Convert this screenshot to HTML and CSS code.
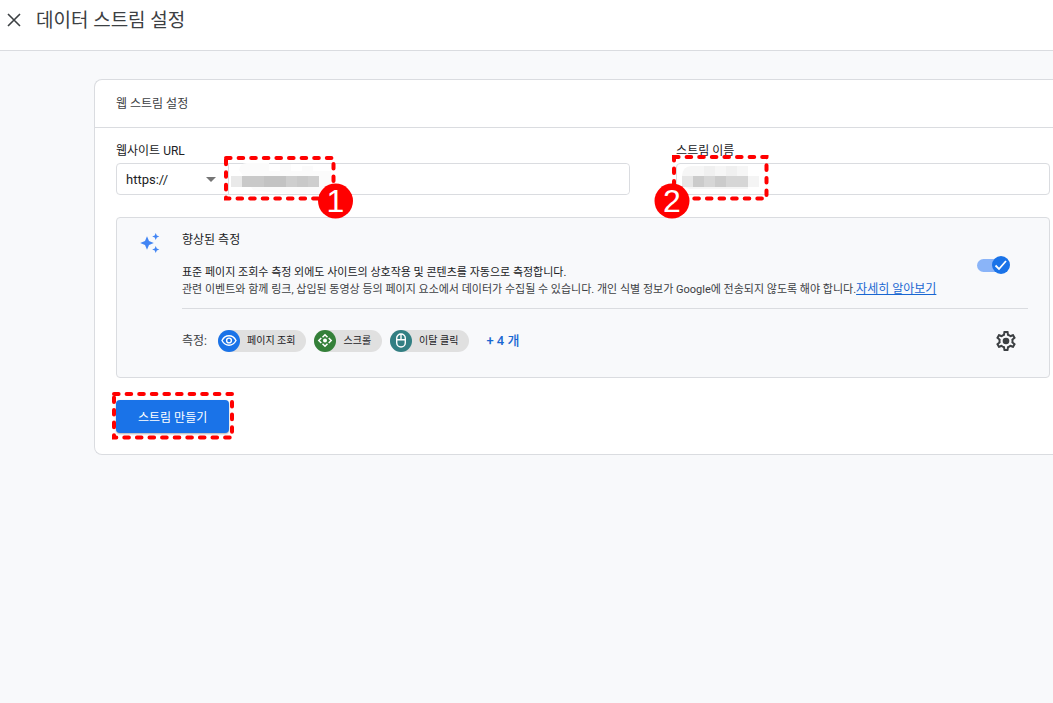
FILE: index.html
```html
<!DOCTYPE html>
<html lang="ko">

<head>
    <meta charset="UTF-8">
    <meta name="viewport" content="width=device-width, initial-scale=1.0">
    <title>데이터 스트림 설정</title>
    <link rel="stylesheet" href="styles.css">
</head>

<body>
    <header class="topbar">
        <button type="button" class="icon-button" aria-label="닫기">
            <svg width="14" height="14" viewBox="0 0 14 14"><path d="M1 1l12 12M13 1L1 13" stroke="#3c4043" stroke-width="1.6" /></svg>
        </button>
        <h1>데이터 스트림 설정</h1>
    </header>

    <main class="card">
        <h2 class="card-title">웹 스트림 설정</h2>
        <form class="card-body">
            <div class="fields">
                <div class="field">
                    <label for="siteUrl">웹사이트 URL</label>
                    <div class="url-box">
                        <div class="protocol">
                            <select aria-label="프로토콜">
                                <option>https://</option>
                                <option>http://</option>
                            </select>
                            <svg class="arrow" width="10" height="5" viewBox="0 0 10 5"><path d="M0 0h10L5 5z" fill="#757575" /></svg>
                        </div>
                        <input type="text" id="siteUrl">
                    </div>
                    <svg class="mark mark-url" width="140" height="70" viewBox="0 0 140 70">
                        <path d="M19 18q1-7 8-7h22v8h11v-7h11v7h11v-5h11v5h18v21q-40 4-78-2z" fill="#fbfbfb" />
                        <path d="M11 24h11v11H11z" fill="#e9e9e9" />
                        <path d="M22 24h77v11H22z" fill="#c9c9c9" />
                        <path d="M44 24h22v11H44z" fill="#c3c3c3" />
                        <path d="M66 24h11v11H66zM88 24h11v11H88z" fill="#cecece" />
                        <rect class="dashes" x="6" y="6" width="107.5" height="40.5" />
                        <circle cx="115.5" cy="49" r="17.5" fill="#f00" />
                        <text x="115.5" y="60">1</text>
                    </svg>
                </div>
                <div class="field">
                    <label for="streamName">스트림 이름</label>
                    <input type="text" id="streamName" class="text-box">
                    <svg class="mark mark-name" width="140" height="70" viewBox="0 0 140 70">
                        <path d="M32 24q1-10 9-10h57v23H41q-9 0-9-13z" fill="#f6f6f6" />
                        <path d="M54 14h11v10H54zM76 14h11v10H76z" fill="#f0f0f0" />
                        <path d="M32 24h11v11H32z" fill="#e6e6e6" />
                        <path d="M43 24h55v11H43z" fill="#d6d6d6" />
                        <path d="M43 24h11v11H43zM65 24h11v11H65z" fill="#cbcbcb" />
                        <path d="M98 24h11v11H98z" fill="#f4f4f4" />
                        <rect class="dashes" x="24" y="5" width="92.5" height="41.5" />
                        <circle cx="22" cy="49" r="17.5" fill="#f00" />
                        <text x="22" y="60">2</text>
                    </svg>
                </div>
            </div>

            <section class="panel">
                <svg class="sparkle" width="20" height="20" viewBox="0 0 20 20" fill="#4285f4">
                    <path d="M7 3.2l2 4.8 4.8 2L9 12l-2 4.800L5 12 .2 10 5 8zM15.700 0l1.100 2.500 2.500 1-2.500 1-1.100 2.500-1-2.500-2.500-1 2.500-1zM15.700 13l1.100 2.500 2.500 1-2.500 1-1.100 2.500-1-2.500-2.500-1 2.500-1z" />
                </svg>
                <div class="panel-main">
                    <div class="summary">
                        <div>
                            <h3>향상된 측정</h3>
                            <p class="lead">표준 페이지 조회수 측정 외에도 사이트의 상호작용 및 콘텐츠를 자동으로 측정합니다.</p>
                            <p class="note">관련 이벤트와 함께 링크, 삽입된 동영상 등의 페이지 요소에서 데이터가 수집될 수 있습니다. 개인 식별 정보가 Google에 전송되지 않도록 해야 합니다.<a href="#">자세히 알아보기</a></p>
                        </div>
                        <input type="checkbox" class="switch" aria-label="향상된 측정" checked>
                    </div>
                    <div class="metrics">
                        <span class="metrics-label">측정:</span>
                        <span class="chip">
                            <svg width="22" height="22" viewBox="0 0 22 22" fill="none" stroke="#fff" stroke-width="1.4">
                                <circle cx="11" cy="11" r="11" fill="#1a73e8" stroke="none" />
                                <path d="M4 10.500q2.500-4.700 7-4.700t7 4.700q-2.500 4.700-7 4.700T4 10.500z" />
                                <circle cx="11" cy="10.500" r="2.400" />
                            </svg>
                            페이지 조회
                        </span>
                        <span class="chip">
                            <svg width="22" height="22" viewBox="0 0 22 22" fill="none" stroke="#fff" stroke-width="1.5">
                                <circle cx="11" cy="11" r="11" fill="#348039" stroke="none" />
                                <path d="M8.500 7.300L11 4.800l2.500 2.500M8.500 13.700l2.500 2.500 2.500-2.500M7.300 8L4.800 10.500l2.500 2.500M14.700 8l2.500 2.500-2.500 2.500" />
                                <circle cx="11" cy="10.500" r="2" fill="#fff" stroke="none" />
                            </svg>
                            스크롤
                        </span>
                        <span class="chip">
                            <svg width="22" height="22" viewBox="0 0 22 22" fill="none" stroke="#fff" stroke-width="1.4">
                                <circle cx="11" cy="11" r="11" fill="#327f83" stroke="none" />
                                <rect x="6.700" y="4" width="8.600" height="13" rx="4.300" />
                                <path d="M6.700 9.800h8.600M11 4v5.800" />
                            </svg>
                            이탈 클릭
                        </span>
                        <a href="#" class="more">+ 4 개</a>
                        <button type="button" class="icon-button settings" aria-label="설정">
                            <svg width="24" height="24" viewBox="0 0 24 24" fill="#3c4043">
                                <path fill-rule="evenodd" d="M19.43 12.98c.04-.32.07-.64.07-.98 0-.34-.03-.66-.07-.98l2.11-1.65c.19-.15.24-.42.12-.64l-2-3.46c-.12-.22-.39-.3-.61-.22l-2.49 1c-.52-.4-1.08-.73-1.69-.98l-.38-2.65C14.46 2.18 14.25 2 14 2h-4c-.25 0-.46.18-.49.42l-.38 2.65c-.61.25-1.17.59-1.69.98l-2.49-1c-.23-.09-.49 0-.61.22l-2 3.46c-.13.22-.07.49.12.64l2.11 1.65c-.04.32-.07.65-.07.98 0 .33.03.66.07.98l-2.11 1.65c-.19.15-.24.42-.12.64l2 3.46c.12.22.39.3.61.22l2.49-1c.52.4 1.08.73 1.69.98l.38 2.65c.03.24.24.42.49.42h4c.25 0 .46-.18.49-.42l.38-2.65c.61-.25 1.17-.59 1.69-.98l2.49 1c.23.09.49 0 .61-.22l2-3.46c.12-.22.07-.49-.12-.64l-2.11-1.65zm-1.98-1.71c.04.31.05.52.05.73 0 .21-.02.43-.05.73l-.14 1.13.89.7 1.08.84-.7 1.21-1.27-.51-1.04-.42-.9.68c-.43.32-.84.56-1.25.73l-1.06.43-.16 1.13-.2 1.35h-1.4l-.19-1.35-.16-1.13-1.06-.43c-.43-.18-.83-.41-1.23-.71l-.91-.7-1.06.43-1.27.51-.7-1.21 1.08-.84.89-.7-.14-1.13c-.03-.31-.05-.54-.05-.74s.02-.43.05-.73l.14-1.13-.89-.7-1.08-.84.7-1.21 1.27.51 1.04.42.9-.68c.43-.32.84-.56 1.25-.73l1.06-.43.16-1.13.2-1.35h1.39l.19 1.35.16 1.13 1.06.43c.43.18.83.41 1.23.71l.91.7 1.06-.43 1.27-.51.7 1.21-1.07.85-.89.7.14 1.13z" />
                                <circle cx="12" cy="12" r="3.300" />
                            </svg>
                        </button>
                    </div>
                </div>
            </section>

            <div class="actions">
                <button type="submit" class="create">스트림 만들기</button>
                <svg class="mark mark-create" width="130" height="60" viewBox="0 0 130 60">
                    <rect class="dashes" x="6" y="6" width="118" height="43.5" />
                </svg>
            </div>
        </form>
    </main>
</body>

</html>
```
FILE: styles.css
```css
* {
    box-sizing: border-box;
}

body {
    font-family: Roboto, "Noto Sans CJK KR", sans-serif;
    font-size: 12px;
    line-height: 18px;
    color: #3c4043;
    background-color: #f8f9fb;
    margin: 0;
    overflow-x: hidden;
}

h1, h2, h3, p {
    margin: 0;
    font-weight: normal;
}

.topbar {
    display: flex;
    align-items: center;
    gap: 15px;
    padding: 5px 7px 15px;
    background-color: #fff;
    border-bottom: 1px solid #dadce0;
}

.topbar h1 {
    padding-top: 2px;
    font-size: 19px;
    line-height: 28px;
}

.icon-button {
    display: flex;
    padding: 0;
    border: none;
    background: none;
    cursor: pointer;
}

.card {
    margin: 28px 0 0 94px;
    background-color: #fff;
    border: 1px solid #dadce0;
    border-right: none;
    border-radius: 8px 0 0 8px;
}

.card-title {
    padding: 15px 21px 14px;
    font-size: 12px;
    line-height: 18px;
    border-bottom: 1px solid #dadce0;
}

.card-body {
    padding: 14px 3px 21px 21px;
}

.fields {
    display: grid;
    grid-template-columns: 11fr 8fr;
    gap: 46px;
}

.field {
    position: relative;
}

.field label {
    display: block;
    margin-bottom: 3px;
    color: #202124;
}

.url-box,
.text-box {
    display: flex;
    width: 100%;
    height: 32px;
    border: 1px solid #dadce0;
    border-radius: 4px;
    background-color: #fff;
}

.url-box input {
    flex: 1;
    border: none;
    border-left: 1px solid #dadce0;
    border-radius: 0 4px 4px 0;
}

.protocol {
    display: flex;
    align-items: center;
    width: 111px;
    position: relative;
}

.protocol select {
    appearance: none;
    width: 100%;
    height: 100%;
    padding: 0 9px;
    border: none;
    background: none;
    font-family: inherit;
    font-size: 13px;
    color: #202124;
}

.arrow {
    position: absolute;
    right: 12px;
    pointer-events: none;
}

/* numbered step markers */
.mark {
    position: absolute;
    pointer-events: none;
}

.mark-url {
    left: 104px;
    top: 10px;
}

.mark-name {
    left: -26px;
    top: 10px;
}

.mark-create {
    left: -8px;
    top: -12px;
}

.mark text {
    font-family: "Liberation Sans", Arial, sans-serif;
    font-size: 32px;
    fill: #fff;
    text-anchor: middle;
}

.dashes {
    fill: none;
    stroke: #f00;
    stroke-width: 4;
    stroke-linecap: round;
    stroke-dasharray: 4.6 8;
}

.panel {
    display: flex;
    gap: 22px;
    margin-top: 22px;
    padding: 13px 21px 24px 23px;
    background-color: #f8f9fb;
    border: 1px solid #dadce0;
    border-radius: 4px;
}

.sparkle {
    flex: none;
    margin-top: 2px;
}

.panel-main {
    flex: 1;
}

.summary {
    display: flex;
    justify-content: space-between;
    align-items: center;
    padding-bottom: 10px;
    border-bottom: 1px solid #dadce0;
}

.panel h3 {
    margin-bottom: 15px;
    font-size: 12px;
    color: #202124;
}

.lead,
.note {
    font-size: 11px;
    line-height: 17px;
}

.lead {
    color: #202124;
}

.note a {
    font-size: 12px;
    color: #1967d2;
}

.switch {
    appearance: none;
    flex: none;
    width: 33px;
    height: 20px;
    margin: 0 18px 0 0;
    background: url('data:image/svg+xml,<svg xmlns="http://www.w3.org/2000/svg" viewBox="0 0 33 20"><rect y="4" width="28" height="13" rx="6.5" fill="%238ab4f8"/><circle cx="24" cy="10" r="9" fill="%231a73e8"/><path d="M18.5 10.5l3.5 3.5 7-8" fill="none" stroke="white" stroke-width="1.8"/></svg>') no-repeat;
    cursor: pointer;
}

.metrics {
    display: flex;
    align-items: center;
    gap: 8px;
    padding-top: 20px;
}

.metrics-label {
    margin-right: 3px;
}

.chip {
    display: flex;
    align-items: center;
    gap: 7px;
    height: 22px;
    padding-right: 11px;
    border-radius: 11px;
    background-color: #e0e0e0;
    font-size: 10px;
    color: #202124;
}

.more {
    margin-left: 9px;
    font-size: 13px;
    font-weight: 500;
    color: #1967d2;
    text-decoration: none;
}

.settings {
    margin-left: auto;
    margin-right: 10px;
}

.actions {
    position: relative;
    margin-top: 22px;
}

.create {
    display: block;
    height: 33px;
    padding: 0 22px;
    border: none;
    border-radius: 4px;
    background-color: #1a73e8;
    box-shadow: 0 1px 2px rgba(60, 64, 67, 0.4);
    color: #fff;
    font-family: inherit;
    font-size: 12px;
    cursor: pointer;
}
```
